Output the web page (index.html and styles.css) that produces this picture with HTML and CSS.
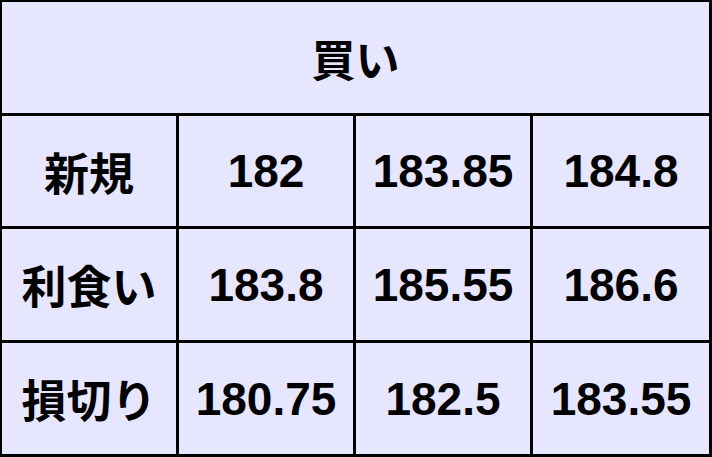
FILE: index.html
```html
<!DOCTYPE html>
<html lang="ja">
<head>
<meta charset="utf-8">
<link rel="stylesheet" href="styles.css">
</head>
<body>
<div class="table">
  <div class="cell head">買い</div>
  <div class="cell label">新規</div>
  <div class="cell num">182</div>
  <div class="cell num">183.85</div>
  <div class="cell num">184.8</div>
  <div class="cell label">利食い</div>
  <div class="cell num">183.8</div>
  <div class="cell num">185.55</div>
  <div class="cell num">186.6</div>
  <div class="cell label">損切り</div>
  <div class="cell num">180.75</div>
  <div class="cell num">182.5</div>
  <div class="cell num">183.55</div>
</div>
</body>
</html>
```

FILE: styles.css
```css
html, body {
  margin: 0;
  padding: 0;
  background: #e6e6ff;
}
.table {
  box-sizing: border-box;
  width: 712px;
  height: 457px;
  display: grid;
  grid-template-columns: 174px 174px 174px 1fr;
  grid-template-rows: 111px 110px 111px 1fr;
  gap: 3px;
  padding: 2px 3px 3px 2px;
  background: #000;
}
.cell {
  background: #e6e6ff;
  display: flex;
  align-items: center;
  justify-content: center;
  color: #000;
}
.head {
  grid-column: 1 / 5;
  font-family: "Noto Sans CJK JP", sans-serif;
  font-weight: 700;
  font-size: 44px;
}
.label {
  font-family: "Noto Sans CJK JP", sans-serif;
  font-weight: 700;
  font-size: 45px;
}
.num {
  font-family: "Liberation Sans", Arial, sans-serif;
  font-weight: 700;
  font-size: 46px;
}
```
